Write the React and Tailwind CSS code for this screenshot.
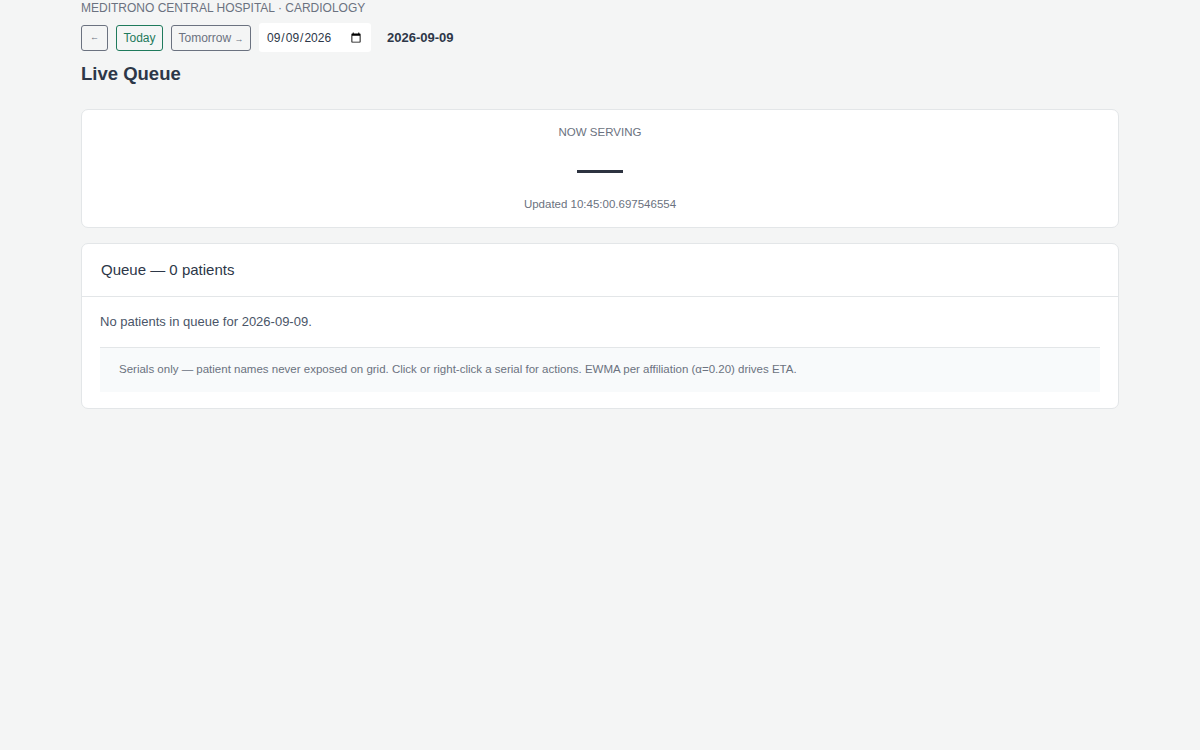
import React from 'react';

const App = () => {
  return (
    <div className="min-h-screen bg-[#f4f5f5] text-[#2d3748]" style={{ fontFamily: '"Liberation Sans", Arial, sans-serif' }}>
      <div className="mx-auto w-[1038px] pt-[1px]">
        <div className="text-[12px] leading-[14px] text-[#6b7280] uppercase">
          Meditrono Central Hospital · Cardiology
        </div>

        <div className="mt-[8px] flex items-center h-[29px]">
          <button className="h-[26px] w-[27px] rounded-[3px] border border-[#6b7280] text-[9px] text-[#6b7280] bg-transparent">
            ←
          </button>
          <button className="ml-[8px] h-[26px] w-[47px] rounded-[3px] border border-[#1f7a5c] text-[12px] text-[#1f7a5c] bg-transparent">
            Today
          </button>
          <button className="ml-[8px] h-[26px] w-[80px] rounded-[3px] border border-[#6b7280] text-[12px] text-[#6b7280] bg-transparent">
            Tomorrow <span className="text-[9px]">→</span>
          </button>
          <input
            type="date"
            defaultValue="2026-09-09"
            className="ml-[8px] h-[29px] w-[112px] rounded-[3px] bg-white px-[7px] text-[12px] text-[#2d3748] outline-none"
            style={{ fontFamily: '"Liberation Sans", Arial, sans-serif' }}
          />
          <span className="ml-[16px] text-[13px] font-bold text-[#2d3748]">2026-09-09</span>
        </div>

        <h1 className="mt-[10px] text-[18.5px] leading-[24px] font-bold text-[#2d3748]">Live Queue</h1>

        <div className="mt-[23px] rounded-[7px] border border-[#e3e6e8] bg-white h-[119px] flex flex-col items-center">
          <div className="mt-[15px] text-[11.5px] leading-[14px] text-[#6b7280]">NOW SERVING</div>
          <div className="mt-[31px] h-[3px] w-[46px] bg-[#2d3340]"></div>
          <div className="mt-[24px] text-[11.5px] leading-[14px] text-[#6b7280]">Updated 10:45:00.697546554</div>
        </div>

        <div className="mt-[15px] rounded-[7px] border border-[#e3e6e8] bg-white">
          <div className="h-[53px] px-[19px] flex items-center border-b border-[#e3e6e8] text-[15px] text-[#2d3748]">
            Queue — 0 patients
          </div>
          <div className="px-[18px] pb-[16px]">
            <div className="pt-[16px] text-[13px] leading-[18px] text-[#4a5568]">No patients in queue for 2026-09-09.</div>
            <div className="mt-[16px] border-t border-[#e3e6e8] bg-[#f8fafb] h-[45px] flex items-center px-[19px] text-[11.5px] text-[#6b7280]">
              Serials only — patient names never exposed on grid. Click or right-click a serial for actions. EWMA per affiliation (α=0.20) drives ETA.
            </div>
          </div>
        </div>
      </div>
    </div>
  );
};

export default App;
